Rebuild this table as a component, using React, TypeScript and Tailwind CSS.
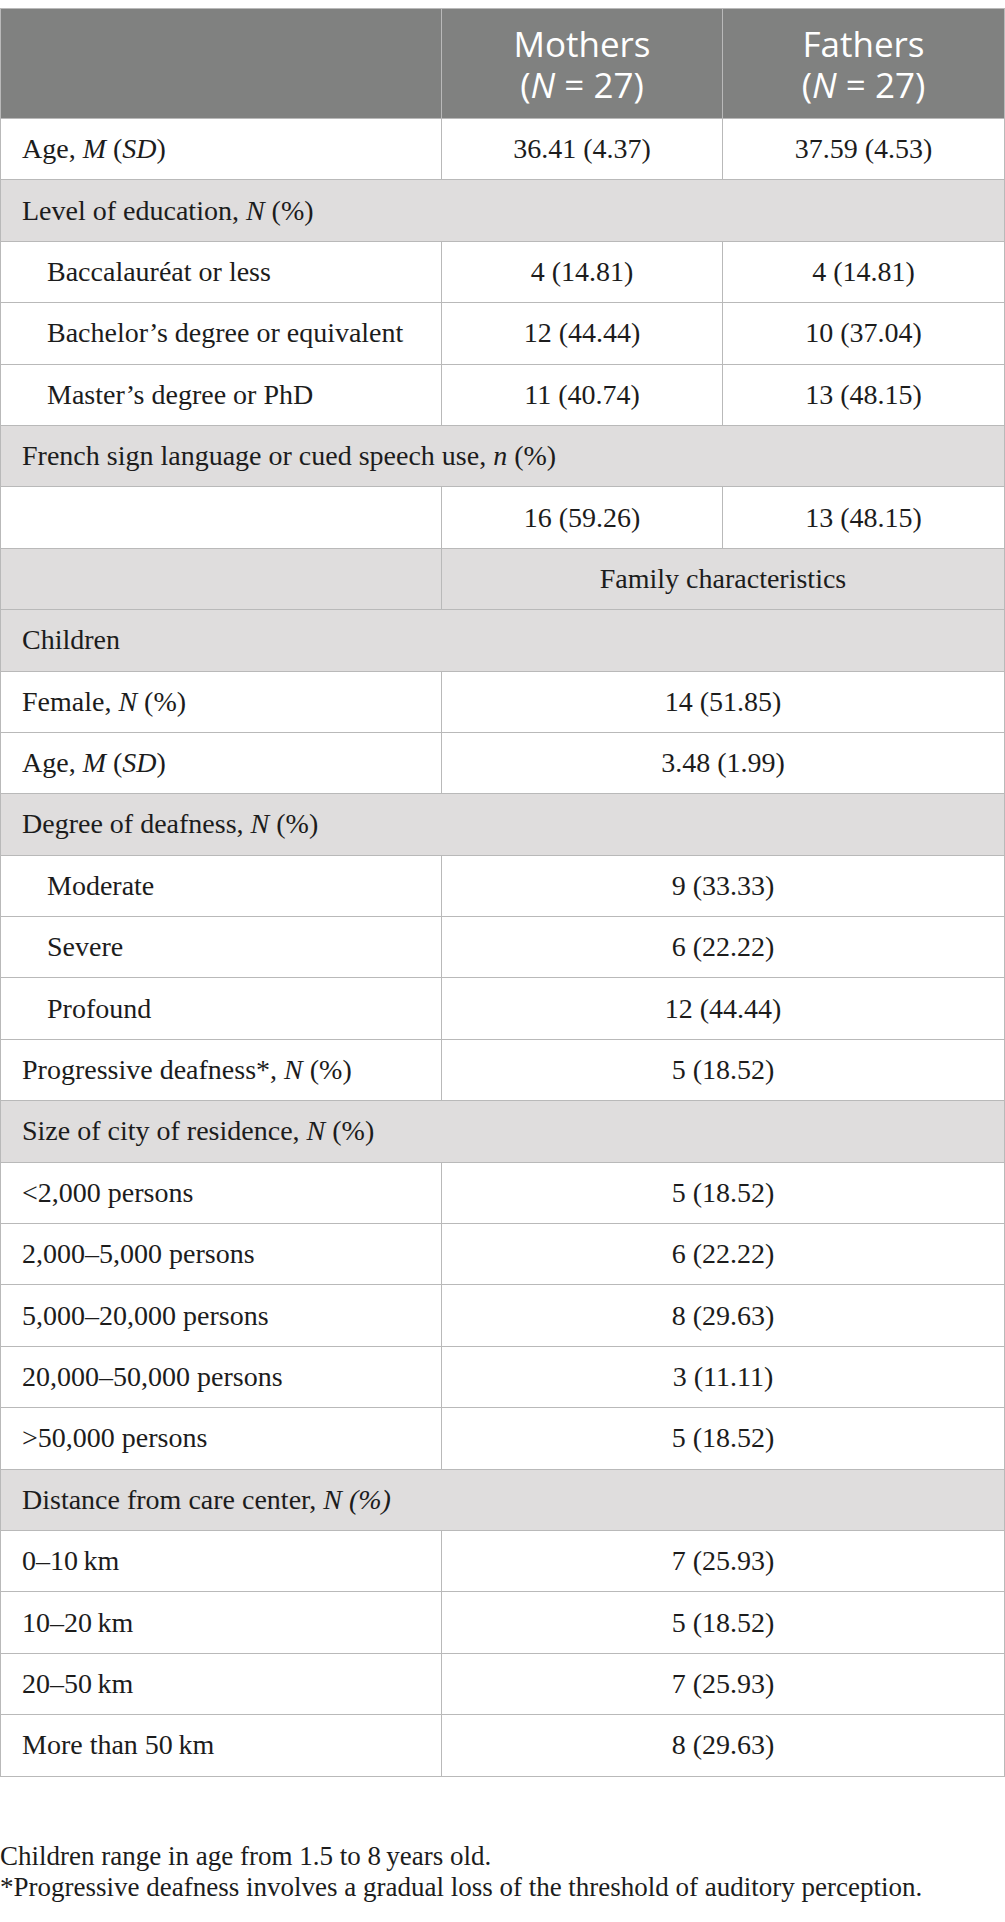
import type { ReactNode } from "react";

type Row =
  | { kind: "section"; label: ReactNode }
  | { kind: "pair"; label: ReactNode; a: string; b: string; indent?: boolean }
  | { kind: "single"; label: ReactNode; v: string; indent?: boolean }
  | { kind: "group"; label: string };

const ROWS: Row[] = [
  {
    kind: "pair",
    label: (
      <>
        Age, <i>M</i> (<i>SD</i>)
      </>
    ),
    a: "36.41 (4.37)",
    b: "37.59 (4.53)",
  },
  {
    kind: "section",
    label: (
      <>
        Level of education, <i>N</i> (%)
      </>
    ),
  },
  { kind: "pair", label: "Baccalauréat or less", a: "4 (14.81)", b: "4 (14.81)", indent: true },
  { kind: "pair", label: "Bachelor’s degree or equivalent", a: "12 (44.44)", b: "10 (37.04)", indent: true },
  { kind: "pair", label: "Master’s degree or PhD", a: "11 (40.74)", b: "13 (48.15)", indent: true },
  {
    kind: "section",
    label: (
      <>
        French sign language or cued speech use, <i>n</i> (%)
      </>
    ),
  },
  { kind: "pair", label: "", a: "16 (59.26)", b: "13 (48.15)" },
  { kind: "group", label: "Family characteristics" },
  { kind: "section", label: "Children" },
  {
    kind: "single",
    label: (
      <>
        Female, <i>N</i> (%)
      </>
    ),
    v: "14 (51.85)",
  },
  {
    kind: "single",
    label: (
      <>
        Age, <i>M</i> (<i>SD</i>)
      </>
    ),
    v: "3.48 (1.99)",
  },
  {
    kind: "section",
    label: (
      <>
        Degree of deafness, <i>N</i> (%)
      </>
    ),
  },
  { kind: "single", label: "Moderate", v: "9 (33.33)", indent: true },
  { kind: "single", label: "Severe", v: "6 (22.22)", indent: true },
  { kind: "single", label: "Profound", v: "12 (44.44)", indent: true },
  {
    kind: "single",
    label: (
      <>
        Progressive deafness*, <i>N</i> (%)
      </>
    ),
    v: "5 (18.52)",
  },
  {
    kind: "section",
    label: (
      <>
        Size of city of residence, <i>N</i> (%)
      </>
    ),
  },
  { kind: "single", label: "<2,000 persons", v: "5 (18.52)" },
  { kind: "single", label: "2,000–5,000 persons", v: "6 (22.22)" },
  { kind: "single", label: "5,000–20,000 persons", v: "8 (29.63)" },
  { kind: "single", label: "20,000–50,000 persons", v: "3 (11.11)" },
  { kind: "single", label: ">50,000 persons", v: "5 (18.52)" },
  {
    kind: "section",
    label: (
      <>
        Distance from care center, <i>N (%)</i>
      </>
    ),
  },
  { kind: "single", label: "0–10\u2009km", v: "7 (25.93)" },
  { kind: "single", label: "10–20\u2009km", v: "5 (18.52)" },
  { kind: "single", label: "20–50\u2009km", v: "7 (25.93)" },
  { kind: "single", label: "More than 50\u2009km", v: "8 (29.63)" },
];

const cell = "h-[61.4px] border border-[#b9b9b9] p-0 align-middle";

function BodyRow({ row }: { row: Row }) {
  if (row.kind === "section") {
    return (
      <tr className="bg-[#dfdddd]">
        <td colSpan={3} className={`${cell} pl-[21px] text-left`}>
          {row.label}
        </td>
      </tr>
    );
  }
  if (row.kind === "group") {
    return (
      <tr className="bg-[#dfdddd]">
        <td className={cell} />
        <td colSpan={2} className={`${cell} text-center`}>
          {row.label}
        </td>
      </tr>
    );
  }
  const pad = row.indent ? "pl-[46px]" : "pl-[21px]";
  return (
    <tr className="bg-white">
      <td className={`${cell} ${pad} text-left`}>{row.label}</td>
      {row.kind === "pair" ? (
        <>
          <td className={`${cell} text-center`}>{row.a}</td>
          <td className={`${cell} text-center`}>{row.b}</td>
        </>
      ) : (
        <td colSpan={2} className={`${cell} text-center`}>
          {row.v}
        </td>
      )}
    </tr>
  );
}

export default function App() {
  return (
    <div className="w-[1005px] bg-white pt-[8px] pb-[20px] font-['Liberation_Serif',serif] text-[#1c1c1c]">
      <table className="w-[1005px] table-fixed border-collapse text-[28px] leading-[34px]">
        <colgroup>
          <col className="w-[441px]" />
          <col className="w-[281px]" />
          <col />
        </colgroup>
        <thead>
          <tr className="bg-[#808180] font-['Open_Sans',sans-serif] text-[35px] leading-[41px] text-white">
            <th className="h-[110px] border border-[#b9b9b9] p-0" />
            <th className="h-[110px] border border-[#b9b9b9] p-0 text-center font-normal">
              <span className="block">Mothers</span>
              <span className="block">
                (<i>N</i> = 27)
              </span>
            </th>
            <th className="h-[110px] border border-[#b9b9b9] p-0 text-center font-normal">
              <span className="block">Fathers</span>
              <span className="block">
                (<i>N</i> = 27)
              </span>
            </th>
          </tr>
        </thead>
        <tbody>
          {ROWS.map((row, i) => (
            <BodyRow key={i} row={row} />
          ))}
        </tbody>
      </table>

      {/* Table notes */}
      <div className="mt-[64px] text-[27px] leading-[31px]">
        <p>Children range in age from 1.5 to 8{"\u2009"}years old.</p>
        <p>*Progressive deafness involves a gradual loss of the threshold of auditory perception.</p>
      </div>
    </div>
  );
}
